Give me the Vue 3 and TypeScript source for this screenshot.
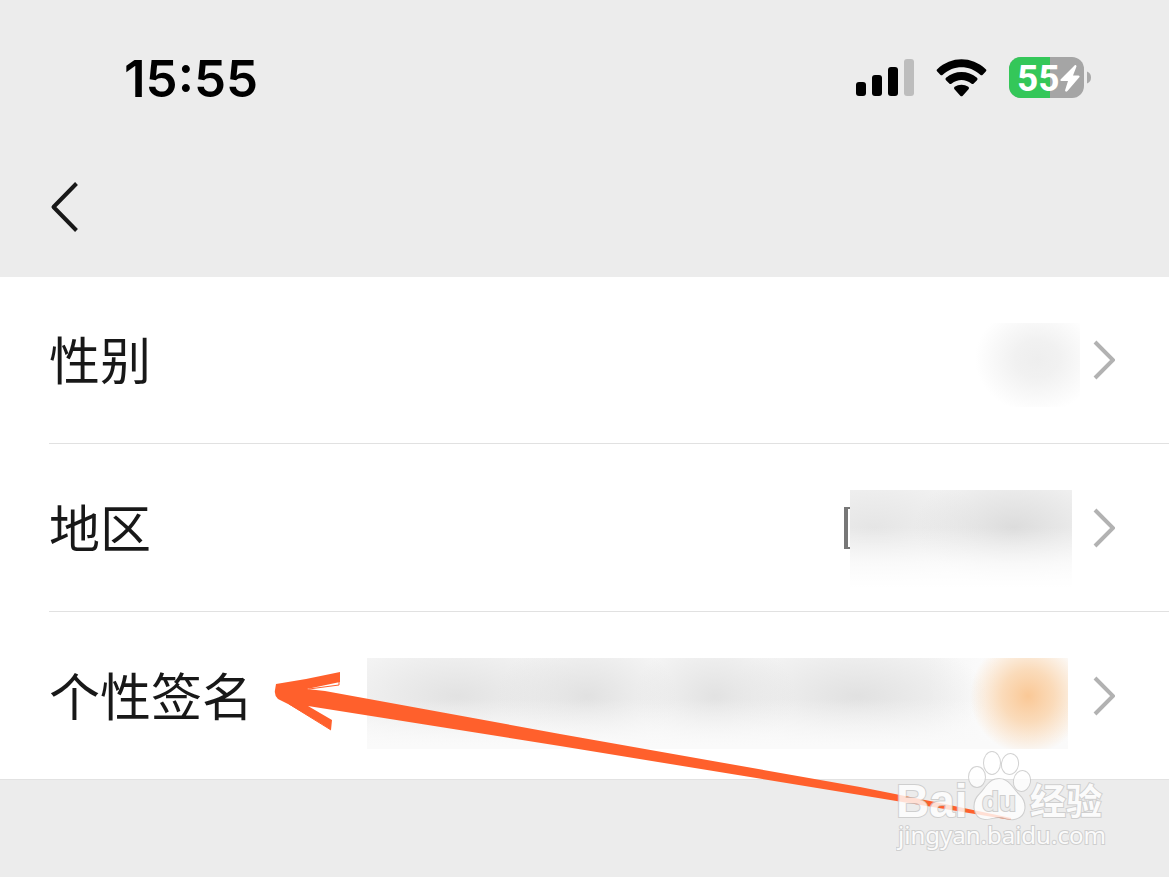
<script setup lang="ts">
interface ProfileRow {
  id: string
  label: string
  clipped: boolean
}

const time = '15:55'
const charge = 55

const rows: ProfileRow[] = [
  { id: 'gender', label: '性别', clipped: false },
  { id: 'region', label: '地区', clipped: true },
  { id: 'signature', label: '个性签名', clipped: false },
]

const signalBars = [
  { x: 0, y: 23 },
  { x: 16, y: 16 },
  { x: 32, y: 8 },
  { x: 48, y: 0 },
]
</script>

<template>
  <main class="screen">
    <header class="top">
      <div class="status">
        <time class="clock">{{ time }}</time>
        <div class="indicators">
          <svg class="signal" viewBox="0 0 58 37" aria-hidden="true">
            <rect
              v-for="(bar, i) in signalBars"
              :key="bar.x"
              :x="bar.x"
              :y="bar.y"
              width="10"
              :height="37 - bar.y"
              rx="3"
              :fill="i < 3 ? '#000' : '#bdbdbd'"
            />
          </svg>
          <svg class="wifi" viewBox="0 0 50 37" aria-hidden="true">
            <path d="M1.2 9.8C15 -3.2 35 -3.2 48.800 9.800Q50 11 48.800 12.200L45.800 15.200Q44.600 16.200 43.400 15.200C32.500 5.400 17.500 5.400 6.600 15.200Q5.400 16.200 4.200 15.200L1.200 12.200Q0 11 1.200 9.800Z" />
            <path d="M9.800 18.300C18.500 10.600 31.500 10.600 40.200 18.300Q41.400 19.500 40.200 20.700L37 23.900Q35.900 25 34.600 23.900C29 19.300 21 19.300 15.400 23.900Q14.100 25 13 23.900L9.800 20.700Q8.600 19.500 9.800 18.300Z" />
            <path d="M18.300 27.200C22.300 24.300 27.700 24.300 31.700 27.200Q33 28.300 31.900 29.500L26.200 35.800Q25 37 23.800 35.800L18.100 29.500Q17 28.300 18.300 27.200Z" />
          </svg>
          <svg class="battery" viewBox="0 0 82 41" role="img" aria-label="电量">
            <defs>
              <clipPath id="cell"><rect width="75" height="41" rx="12" /></clipPath>
            </defs>
            <g clip-path="url(#cell)">
              <rect width="75" height="41" fill="#a5a5a5" />
              <rect width="41" height="41" fill="#34c759" />
            </g>
            <path d="M78 14.500Q82 16 82 20.500T78 26.500Z" fill="#a9a9a9" />
            <text class="charge" x="8" y="34">{{ charge }}</text>
            <path d="M66 8L51.500 22.500Q51 24 52.500 24H59L56 33.500Q56.500 35.500 58.500 34L70.500 20Q71 18.500 69.500 18.500H64L67.500 9.500Q67.500 7.500 66 8Z" fill="#fff" />
          </svg>
        </div>
      </div>
      <nav class="nav">
        <button class="back" type="button" aria-label="返回">
          <svg viewBox="0 0 30 52" aria-hidden="true"><path d="M26.500 2.500L3.500 26L26.500 49.500" /></svg>
        </button>
      </nav>
    </header>

    <section class="list">
      <button v-for="row in rows" :key="row.id" class="row" type="button">
        <span class="label">{{ row.label }}</span>
        <span v-if="row.clipped" class="edge"></span>
        <span class="smudge" :class="row.id"></span>
        <svg class="chevron" viewBox="0 0 22 40" aria-hidden="true"><path d="M2 2L20 20L2 38" /></svg>
      </button>
    </section>

    <svg class="arrow" viewBox="0 0 742 152" aria-hidden="true">
      <path d="M6 14L36 9L70 2L70 12L37 19L55 21L290 64L590 117L670 133L741 148L741 150L705 144L590 125L290 76L38 36L62 50L61 60L50 53L20 35L8 29Q4 25 5 20Z" />
      <path class="bristle" d="M39 19L69 15V11M19 34L61 60" />
    </svg>

    <svg class="watermark" viewBox="0 0 220 110" role="img" aria-label="Baidu 经验">
      <g class="mark">
        <text class="brand" x="0" y="71">Bai</text>
        <path d="M103 33C93 33 90 42 84 48C76 55 76 72 89 73C96 73 98 71 103 71C109 71 111 74 118 73C131 71 131 56 123 49C116 42 113 33 103 33Z" />
        <ellipse cx="81" cy="31" rx="8" ry="10" />
        <ellipse cx="96" cy="17" rx="8" ry="11" />
        <ellipse cx="114" cy="18" rx="8" ry="10" transform="rotate(10 114 18)" />
        <ellipse cx="126" cy="35" rx="8" ry="10" transform="rotate(10 126 35)" />
        <text class="du" x="86" y="65">du</text>
        <text class="han" x="134" y="69">经验</text>
        <text class="site" x="2" y="98">jingyan.baidu.com</text>
      </g>
    </svg>
  </main>
</template>

<style>
body {
  margin: 0;
  background: #ececec;
}
</style>

<style scoped>
.screen {
  position: relative;
  min-height: 100vh;
  overflow: hidden;
  background: #ececec;
  color: #181818;
  font-family: "Liberation Sans", "Noto Sans CJK SC", sans-serif;
}

.status {
  display: flex;
  align-items: center;
  justify-content: space-between;
  height: 155px;
  padding: 0 78px 0 124px;
}

.clock {
  padding-top: 2px;
  color: #000;
  font-family: Inter, sans-serif;
  font-size: 51px;
  font-weight: 600;
  line-height: 62px;
}

.indicators {
  display: flex;
  align-items: center;
  gap: 22px;
}

.signal {
  width: 58px;
  height: 37px;
}

.wifi {
  width: 51px;
  height: 38px;
}

.battery {
  width: 82px;
  height: 41px;
  overflow: visible;
}

.charge {
  fill: #fff;
  font-family: Roboto, sans-serif;
  font-size: 37px;
  font-weight: 700;
}

.nav {
  display: flex;
  align-items: center;
  height: 104px;
  padding: 0 50px 18px;
}

.back {
  width: 30px;
  height: 52px;
  padding: 0;
  border: 0;
  background: none;
}

.back svg {
  display: block;
}

.back path {
  fill: none;
  stroke: #181818;
  stroke-width: 4;
  stroke-linejoin: round;
}

.list {
  border-bottom: 1px solid #e2e2e2;
  background: #fff;
}

.row {
  position: relative;
  display: flex;
  align-items: center;
  width: 100%;
  height: 166px;
  padding: 0 54px 0 49px;
  border: 0;
  background: none;
  color: inherit;
  font: inherit;
  text-align: left;
}

.row + .row {
  height: 168px;
  padding-top: 1px;
}

.row + .row::before {
  position: absolute;
  top: 0;
  right: 0;
  left: 49px;
  height: 1px;
  background: #e1e1e1;
  content: "";
}

.label {
  margin-right: auto;
  padding-top: 6px;
  font-size: 51px;
  line-height: 72px;
  white-space: nowrap;
}

.edge {
  box-sizing: border-box;
  width: 6px;
  height: 42px;
  border: solid #777;
  border-width: 2px 0 2px 4px;
}

.smudge {
  align-self: flex-start;
  margin-top: 46px;
}

.gender {
  width: 105px;
  height: 84px;
  margin-right: 13px;
  background: radial-gradient(ellipse 62px 54px at 62px 36px, #eee, #f1f1f1 35%, #fff);
}

.region {
  width: 222px;
  height: 98px;
  margin-right: 21px;
  background:
    linear-gradient(to bottom, transparent 38%, rgba(255, 255, 255, 0.7) 75%, #fff 100%),
    radial-gradient(ellipse 100px 60px at 164px 38px, #dcdcdc, transparent),
    radial-gradient(ellipse 110px 60px at 24px 38px, #e5e5e5, transparent),
    #f3f3f3;
}

.signature {
  width: 701px;
  height: 91px;
  margin-right: 25px;
  background:
    radial-gradient(ellipse 58px 58px at 661px 38px, #fac896, rgba(250, 208, 164, 0.75) 45%, transparent),
    linear-gradient(to bottom, transparent 45%, #fafafa 96%),
    radial-gradient(ellipse 90px 60px at 220px 38px, #e1e1e1, transparent),
    radial-gradient(ellipse 130px 60px at 90px 38px, #e2e2e2, transparent),
    radial-gradient(ellipse 80px 60px at 348px 38px, #e2e2e2, transparent),
    radial-gradient(ellipse 130px 60px at 490px 38px, #e1e1e1, transparent),
    linear-gradient(to right, #f5f5f5 80%, #fcfcfc 90%);
}

.chevron {
  width: 22px;
  height: 40px;
}

.chevron path {
  fill: none;
  stroke: #b2b2b2;
  stroke-width: 4;
}

.arrow {
  position: absolute;
  top: 670px;
  left: 270px;
  width: 742px;
  height: 152px;
  fill: #ff602c;
  pointer-events: none;
}

.bristle {
  fill: none;
  stroke: #ff602c;
  stroke-width: 1;
}

.watermark {
  position: absolute;
  top: 746px;
  right: 53px;
  width: 220px;
  height: 110px;
  pointer-events: none;
}

.mark {
  fill: #fff;
  stroke: #c8c8c8;
  stroke-width: 2;
  paint-order: stroke;
  opacity: 0.8;
}

.brand {
  font-size: 46px;
  font-weight: 700;
}

.du {
  fill: #ececec;
  font-size: 28px;
  font-weight: 700;
}

.han {
  font-family: "Noto Sans CJK SC", sans-serif;
  font-size: 36px;
  font-weight: 700;
}

.site {
  font-family: "Noto Sans", sans-serif;
  font-size: 24px;
}
</style>
